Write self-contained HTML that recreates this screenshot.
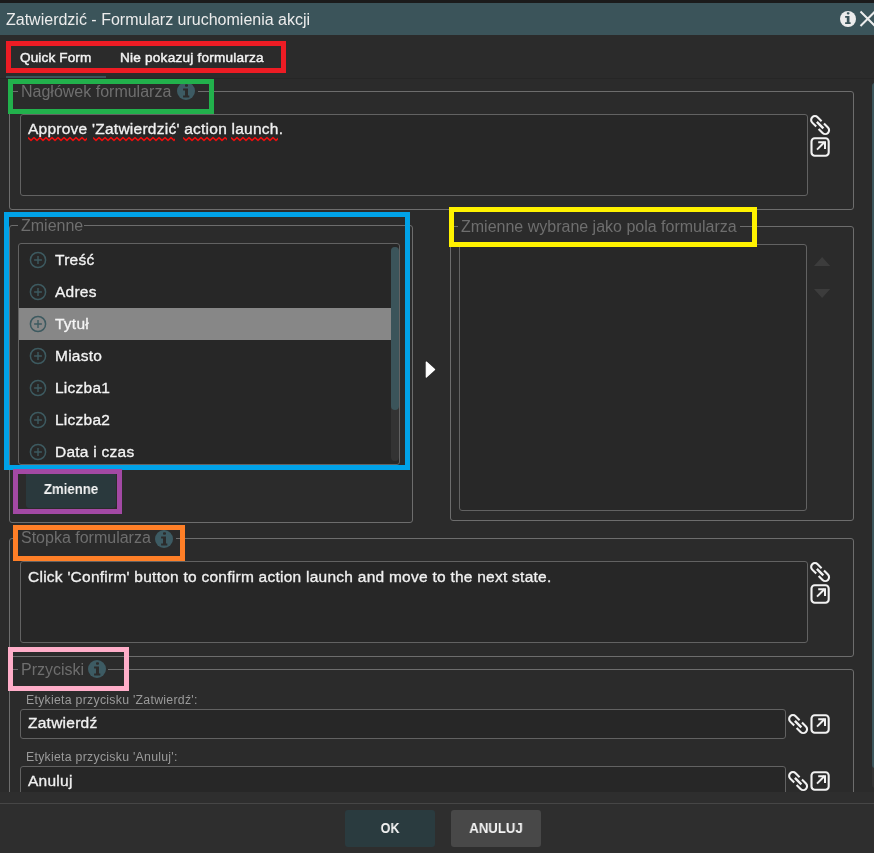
<!DOCTYPE html>
<html><head><meta charset="utf-8">
<style>
*{margin:0;padding:0;box-sizing:border-box}
html,body{width:874px;height:853px;overflow:hidden;background:#2b2b2b;font-family:"Liberation Sans",sans-serif}
.a{position:absolute}
.t{position:absolute;white-space:nowrap;line-height:1;will-change:transform}
.fs{position:absolute;border:1px solid #6d6d6d;border-radius:3px}
.box{position:absolute;border:1px solid #626262;border-radius:3px;background:#272727}
.lb{position:absolute;background:#2b2b2b}
.ann{position:absolute;border-style:solid}
.m{-webkit-text-stroke:0.25px #f0f0f0}
</style></head><body>
<div class="a" style="left:0;top:0;width:874px;height:3px;background:#1b1b1b"></div>
<div class="a" style="left:0;top:3px;width:874px;height:32px;background:#3b545a"></div>
<div class="t" style="left:6px;top:11.51px;font-size:16px;color:#ececec;">Zatwierdzić - Formularz uruchomienia akcji</div>
<svg class="a" style="left:839.0px;top:10.0px" width="18" height="18" viewBox="-9.0 -9.0 18 18"><circle cx="0" cy="0" r="8.0" fill="#ececec"/><g transform="translate(-0.3 -0.8) scale(0.8888888888888888)"><rect x="-1" y="-6.7" width="3" height="2.4" rx="0.9" fill="#3b545a"/><path d="M-2.9 -2.6H2V4.5H3.3V6.5H-2.9V4.5H-1V-0.5H-2.9Z" fill="#3b545a"/></g></svg>
<svg class="a" style="left:858px;top:9px" width="16" height="20"><path d="M2.5 2.5L17 17M17 2.5L2.5 17" stroke="#ececec" stroke-width="2"/></svg>
<div class="t" style="left:20.3px;top:51.09px;font-size:13.6px;color:#f2f2f2;letter-spacing:0.12px;-webkit-text-stroke:0.45px #f2f2f2">Quick Form</div>
<div class="t" style="left:119.5px;top:51.09px;font-size:13.6px;color:#f2f2f2;letter-spacing:0.22px;-webkit-text-stroke:0.45px #f2f2f2">Nie pokazuj formularza</div>
<div class="a" style="left:0;top:78px;width:874px;height:1px;background:#262626"></div>
<div class="a" style="left:6px;top:76px;width:100px;height:2px;background:#3b545a"></div>
<div class="fs" style="left:9px;top:91px;width:845px;height:119px"></div>
<div class="lb" style="left:18px;top:84px;width:180px;height:14px"></div>
<div class="t" style="left:21px;top:83.51px;font-size:16px;color:#6e6e6e;">Nagłówek formularza</div>
<svg class="a" style="left:176.3px;top:81.3px" width="20" height="20" viewBox="-10.0 -10.0 20 20"><circle cx="0" cy="0" r="9.0" fill="#3d5b63"/><g transform="translate(0 0) scale(1.0)"><rect x="-1" y="-6.7" width="3" height="2.4" rx="0.9" fill="#2b2b2b"/><path d="M-2.9 -2.6H2V4.5H3.3V6.5H-2.9V4.5H-1V-0.5H-2.9Z" fill="#2b2b2b"/></g></svg>
<div class="box" style="left:20px;top:114px;width:788px;height:82px"></div>
<div class="t" style="left:28.3px;top:121.33px;font-size:15.5px;color:#f0f0f0;letter-spacing:0.25px;-webkit-text-stroke:0.33px #f0f0f0">Approve 'Zatwierdzić' action launch.</div>
<svg class="a" style="left:28px;top:136px;overflow:hidden" width="59" height="6" viewBox="0 0 59 6"><path d="M0 1.6 L3 4.4 L6 1.6 L9 4.4 L12 1.6 L15 4.4 L18 1.6 L21 4.4 L24 1.6 L27 4.4 L30 1.6 L33 4.4 L36 1.6 L39 4.4 L42 1.6 L45 4.4 L48 1.6 L51 4.4 L54 1.6 L57 4.4 L60 1.6" fill="none" stroke="#e81010" stroke-width="1.6" stroke-linejoin="round"/></svg>
<svg class="a" style="left:92.5px;top:136px;overflow:hidden" width="82.5" height="6" viewBox="0 0 82.5 6"><path d="M0 1.6 L3 4.4 L6 1.6 L9 4.4 L12 1.6 L15 4.4 L18 1.6 L21 4.4 L24 1.6 L27 4.4 L30 1.6 L33 4.4 L36 1.6 L39 4.4 L42 1.6 L45 4.4 L48 1.6 L51 4.4 L54 1.6 L57 4.4 L60 1.6 L63 4.4 L66 1.6 L69 4.4 L72 1.6 L75 4.4 L78 1.6 L81 4.4 L84 1.6" fill="none" stroke="#e81010" stroke-width="1.6" stroke-linejoin="round"/></svg>
<svg class="a" style="left:183px;top:136px;overflow:hidden" width="44" height="6" viewBox="0 0 44 6"><path d="M0 1.6 L3 4.4 L6 1.6 L9 4.4 L12 1.6 L15 4.4 L18 1.6 L21 4.4 L24 1.6 L27 4.4 L30 1.6 L33 4.4 L36 1.6 L39 4.4 L42 1.6 L45 4.4" fill="none" stroke="#e81010" stroke-width="1.6" stroke-linejoin="round"/></svg>
<svg class="a" style="left:231px;top:136px;overflow:hidden" width="47" height="6" viewBox="0 0 47 6"><path d="M0 1.6 L3 4.4 L6 1.6 L9 4.4 L12 1.6 L15 4.4 L18 1.6 L21 4.4 L24 1.6 L27 4.4 L30 1.6 L33 4.4 L36 1.6 L39 4.4 L42 1.6 L45 4.4 L48 1.6" fill="none" stroke="#e81010" stroke-width="1.6" stroke-linejoin="round"/></svg>
<svg class="a" style="left:810px;top:115px" width="21" height="21" viewBox="0 0 21 21"><g transform="translate(10.1 10.1) rotate(45)" fill="none" stroke="#f2f2f2" stroke-width="2.1"><path d="M-1.7 -3.8H-7.3A3.8 3.8 0 0 0 -7.3 3.8H-1.7"/><path d="M1.7 3.8H7.3A3.8 3.8 0 0 0 7.3 -3.8H1.7"/><path d="M-4.6 0H4.6" stroke-width="2.3"/></g></svg>
<svg class="a" style="left:810px;top:137px" width="21" height="21" viewBox="0 0 21 21"><rect x="1.5" y="1.3" width="17.2" height="17.4" rx="3.2" fill="none" stroke="#f2f2f2" stroke-width="2.1"/><path d="M7 12.6L14.6 5" stroke="#f2f2f2" stroke-width="2"/><path d="M8.2 5.2H15V12" fill="none" stroke="#f2f2f2" stroke-width="2"/></svg>
<div class="fs" style="left:9px;top:225px;width:404px;height:298px"></div>
<div class="lb" style="left:17.5px;top:218px;width:66px;height:14px"></div>
<div class="t" style="left:20.5px;top:217.76px;font-size:16px;color:#6e6e6e;">Zmienne</div>
<div class="box" style="left:18px;top:243px;width:382px;height:222px"></div>
<div class="a" style="left:19px;top:308px;width:372px;height:32px;background:#878787"></div>
<div class="a" style="left:19px;top:244px;width:380px;height:220px;overflow:hidden">
<svg class="a" style="left:10px;top:7.4px" width="18" height="18" viewBox="0 0 18 18"><circle cx="9" cy="9" r="7.6" fill="none" stroke="#3d5a60" stroke-width="1.5"/><path d="M9 5.1V12.9M5.1 9H12.9" stroke="#3d5a60" stroke-width="1.4"/></svg>
<div class="t" style="left:35.5px;top:7.88px;font-size:15.5px;color:#f4f4f4;letter-spacing:0.25px;-webkit-text-stroke:0.3px #f4f4f4">Treść</div>
<svg class="a" style="left:10px;top:39.4px" width="18" height="18" viewBox="0 0 18 18"><circle cx="9" cy="9" r="7.6" fill="none" stroke="#3d5a60" stroke-width="1.5"/><path d="M9 5.1V12.9M5.1 9H12.9" stroke="#3d5a60" stroke-width="1.4"/></svg>
<div class="t" style="left:35.5px;top:39.88px;font-size:15.5px;color:#f4f4f4;letter-spacing:0.25px;-webkit-text-stroke:0.3px #f4f4f4">Adres</div>
<svg class="a" style="left:10px;top:71.4px" width="18" height="18" viewBox="0 0 18 18"><circle cx="9" cy="9" r="7.6" fill="none" stroke="#3d5a60" stroke-width="1.5"/><path d="M9 5.1V12.9M5.1 9H12.9" stroke="#3d5a60" stroke-width="1.4"/></svg>
<div class="t" style="left:35.5px;top:71.88px;font-size:15.5px;color:#f4f4f4;letter-spacing:0.25px;-webkit-text-stroke:0.3px #f4f4f4">Tytuł</div>
<svg class="a" style="left:10px;top:103.4px" width="18" height="18" viewBox="0 0 18 18"><circle cx="9" cy="9" r="7.6" fill="none" stroke="#3d5a60" stroke-width="1.5"/><path d="M9 5.1V12.9M5.1 9H12.9" stroke="#3d5a60" stroke-width="1.4"/></svg>
<div class="t" style="left:35.5px;top:103.88px;font-size:15.5px;color:#f4f4f4;letter-spacing:0.25px;-webkit-text-stroke:0.3px #f4f4f4">Miasto</div>
<svg class="a" style="left:10px;top:135.4px" width="18" height="18" viewBox="0 0 18 18"><circle cx="9" cy="9" r="7.6" fill="none" stroke="#3d5a60" stroke-width="1.5"/><path d="M9 5.1V12.9M5.1 9H12.9" stroke="#3d5a60" stroke-width="1.4"/></svg>
<div class="t" style="left:35.5px;top:135.88px;font-size:15.5px;color:#f4f4f4;letter-spacing:0.25px;-webkit-text-stroke:0.3px #f4f4f4">Liczba1</div>
<svg class="a" style="left:10px;top:167.4px" width="18" height="18" viewBox="0 0 18 18"><circle cx="9" cy="9" r="7.6" fill="none" stroke="#3d5a60" stroke-width="1.5"/><path d="M9 5.1V12.9M5.1 9H12.9" stroke="#3d5a60" stroke-width="1.4"/></svg>
<div class="t" style="left:35.5px;top:167.88px;font-size:15.5px;color:#f4f4f4;letter-spacing:0.25px;-webkit-text-stroke:0.3px #f4f4f4">Liczba2</div>
<svg class="a" style="left:10px;top:199.4px" width="18" height="18" viewBox="0 0 18 18"><circle cx="9" cy="9" r="7.6" fill="none" stroke="#3d5a60" stroke-width="1.5"/><path d="M9 5.1V12.9M5.1 9H12.9" stroke="#3d5a60" stroke-width="1.4"/></svg>
<div class="t" style="left:35.5px;top:199.88px;font-size:15.5px;color:#f4f4f4;letter-spacing:0.25px;-webkit-text-stroke:0.3px #f4f4f4">Data i czas</div>
</div>
<div class="a" style="left:391px;top:247px;width:7.5px;height:214px;border-radius:4px;background:#333333"></div>
<div class="a" style="left:391px;top:247px;width:7.5px;height:162.5px;border-radius:4px;background:#3b545a"></div>
<div class="a" style="left:26px;top:470px;width:90px;height:38px;background:#2a393d;border-radius:3px"></div>
<div class="t" style="left:26px;top:481.9px;width:90px;text-align:center;font-size:14.4px;font-weight:700;color:#f4f4f4;transform:scaleX(0.92)">Zmienne</div>
<svg class="a" style="left:424px;top:360px" width="14" height="20"><path d="M2.3 2L10.6 9.5L2.3 17Z" fill="#fff" stroke="#fff" stroke-width="1.2" stroke-linejoin="round"/></svg>
<div class="fs" style="left:450px;top:226px;width:404px;height:295px"></div>
<div class="lb" style="left:458px;top:219px;width:281.5px;height:14px"></div>
<div class="t" style="left:461px;top:218.76px;font-size:16px;color:#6e6e6e;">Zmienne wybrane jako pola formularza</div>
<div class="box" style="left:459px;top:244px;width:348px;height:267px;background:#282828"></div>
<svg class="a" style="left:814px;top:256px" width="17" height="43"><path d="M0 10L8.1 1L16.2 10Z M0 33H16.2L8.1 42Z" fill="#3c3c3c"/></svg>
<div class="fs" style="left:9px;top:538px;width:845px;height:119px"></div>
<div class="lb" style="left:18px;top:531px;width:158px;height:14px"></div>
<div class="t" style="left:20.8px;top:530.36px;font-size:16px;color:#6e6e6e;">Stopka formularza</div>
<svg class="a" style="left:154.3px;top:528.5px" width="20" height="20" viewBox="-10.0 -10.0 20 20"><circle cx="0" cy="0" r="9.0" fill="#3d5b63"/><g transform="translate(0 0) scale(1.0)"><rect x="-1" y="-6.7" width="3" height="2.4" rx="0.9" fill="#2b2b2b"/><path d="M-2.9 -2.6H2V4.5H3.3V6.5H-2.9V4.5H-1V-0.5H-2.9Z" fill="#2b2b2b"/></g></svg>
<div class="box" style="left:20px;top:561px;width:788px;height:82px"></div>
<div class="t" style="left:28.3px;top:568.88px;font-size:15.5px;color:#f0f0f0;letter-spacing:0.25px;-webkit-text-stroke:0.33px #f0f0f0">Click 'Confirm' button to confirm action launch and move to the next state.</div>
<svg class="a" style="left:810px;top:562px" width="21" height="21" viewBox="0 0 21 21"><g transform="translate(10.1 10.1) rotate(45)" fill="none" stroke="#f2f2f2" stroke-width="2.1"><path d="M-1.7 -3.8H-7.3A3.8 3.8 0 0 0 -7.3 3.8H-1.7"/><path d="M1.7 3.8H7.3A3.8 3.8 0 0 0 7.3 -3.8H1.7"/><path d="M-4.6 0H4.6" stroke-width="2.3"/></g></svg>
<svg class="a" style="left:810px;top:584px" width="21" height="21" viewBox="0 0 21 21"><rect x="1.5" y="1.3" width="17.2" height="17.4" rx="3.2" fill="none" stroke="#f2f2f2" stroke-width="2.1"/><path d="M7 12.6L14.6 5" stroke="#f2f2f2" stroke-width="2"/><path d="M8.2 5.2H15V12" fill="none" stroke="#f2f2f2" stroke-width="2"/></svg>
<div class="fs" style="left:9px;top:669px;width:845px;height:200px"></div>
<div class="lb" style="left:18px;top:662px;width:89.5px;height:14px"></div>
<div class="t" style="left:21px;top:661.76px;font-size:16px;color:#6e6e6e;">Przyciski</div>
<svg class="a" style="left:87.0px;top:659.0px" width="20" height="20" viewBox="-10.0 -10.0 20 20"><circle cx="0" cy="0" r="9.0" fill="#3d5b63"/><g transform="translate(0 0) scale(1.0)"><rect x="-1" y="-6.7" width="3" height="2.4" rx="0.9" fill="#2b2b2b"/><path d="M-2.9 -2.6H2V4.5H3.3V6.5H-2.9V4.5H-1V-0.5H-2.9Z" fill="#2b2b2b"/></g></svg>
<div class="t" style="left:26.4px;top:693.89px;font-size:12.3px;color:#9a9a9a;letter-spacing:0.27px;">Etykieta przycisku 'Zatwierdź':</div>
<div class="box" style="left:20px;top:709px;width:766px;height:30px"></div>
<div class="t" style="left:28px;top:715.48px;font-size:15.5px;color:#f0f0f0;letter-spacing:0.25px;-webkit-text-stroke:0.33px #f0f0f0">Zatwierdź</div>
<svg class="a" style="left:788px;top:714px" width="21" height="21" viewBox="0 0 21 21"><g transform="translate(10.1 10.1) rotate(45)" fill="none" stroke="#f2f2f2" stroke-width="2.1"><path d="M-1.7 -3.8H-7.3A3.8 3.8 0 0 0 -7.3 3.8H-1.7"/><path d="M1.7 3.8H7.3A3.8 3.8 0 0 0 7.3 -3.8H1.7"/><path d="M-4.6 0H4.6" stroke-width="2.3"/></g></svg>
<svg class="a" style="left:810px;top:714px" width="21" height="21" viewBox="0 0 21 21"><rect x="1.5" y="1.3" width="17.2" height="17.4" rx="3.2" fill="none" stroke="#f2f2f2" stroke-width="2.1"/><path d="M7 12.6L14.6 5" stroke="#f2f2f2" stroke-width="2"/><path d="M8.2 5.2H15V12" fill="none" stroke="#f2f2f2" stroke-width="2"/></svg>
<div class="t" style="left:26.4px;top:750.69px;font-size:12.3px;color:#9a9a9a;letter-spacing:0.27px;">Etykieta przycisku 'Anuluj':</div>
<div class="box" style="left:20px;top:766px;width:766px;height:30px"></div>
<div class="t" style="left:28px;top:773.08px;font-size:15.5px;color:#f0f0f0;letter-spacing:0.25px;-webkit-text-stroke:0.33px #f0f0f0">Anuluj</div>
<svg class="a" style="left:788px;top:771px" width="21" height="21" viewBox="0 0 21 21"><g transform="translate(10.1 10.1) rotate(45)" fill="none" stroke="#f2f2f2" stroke-width="2.1"><path d="M-1.7 -3.8H-7.3A3.8 3.8 0 0 0 -7.3 3.8H-1.7"/><path d="M1.7 3.8H7.3A3.8 3.8 0 0 0 7.3 -3.8H1.7"/><path d="M-4.6 0H4.6" stroke-width="2.3"/></g></svg>
<svg class="a" style="left:810px;top:771px" width="21" height="21" viewBox="0 0 21 21"><rect x="1.5" y="1.3" width="17.2" height="17.4" rx="3.2" fill="none" stroke="#f2f2f2" stroke-width="2.1"/><path d="M7 12.6L14.6 5" stroke="#f2f2f2" stroke-width="2"/><path d="M8.2 5.2H15V12" fill="none" stroke="#f2f2f2" stroke-width="2"/></svg>
<div class="a" style="left:0;top:792px;width:874px;height:61px;background:#2e2e2e"></div>
<div class="a" style="left:0;top:803px;width:874px;height:1px;background:#464646"></div>
<div class="a" style="left:345px;top:810px;width:90px;height:37px;background:#2a3b3f;border-radius:3px"></div>
<div class="t" style="left:345px;top:820.9px;width:90px;text-align:center;font-size:14.4px;font-weight:700;color:#f4f4f4;transform:scaleX(0.87)">OK</div>
<div class="a" style="left:451px;top:810px;width:90px;height:37px;background:#484848;border-radius:3px"></div>
<div class="t" style="left:451px;top:820.9px;width:90px;text-align:center;font-size:14.4px;font-weight:700;color:#f4f4f4;transform:scaleX(0.915)">ANULUJ</div>
<div class="a" style="left:872px;top:83px;width:6px;height:705px;background:#333333;border-radius:3px"></div>
<div class="a" style="left:872px;top:83px;width:6px;height:685px;background:#3b545a;border-radius:3px"></div>
<div class="ann" style="left:6px;top:41px;width:280px;height:32px;border-color:#ed1c24;border-width:5px"></div>
<div class="ann" style="left:8px;top:79px;width:206px;height:34.5px;border-color:#22b14c;border-width:5px"></div>
<div class="ann" style="left:4px;top:212px;width:406px;height:258px;border-color:#00a2e8;border-width:5px"></div>
<div class="ann" style="left:449px;top:207px;width:308px;height:40px;border-color:#fff200;border-width:5px"></div>
<div class="ann" style="left:13px;top:469px;width:109px;height:45px;border-color:#a349a4;border-width:5px"></div>
<div class="ann" style="left:13px;top:525px;width:172px;height:36px;border-color:#ff7f27;border-width:5px"></div>
<div class="ann" style="left:8px;top:647.4px;width:120.6px;height:43.80000000000007px;border-color:#ffaec9;border-width:5px"></div>
</body></html>
